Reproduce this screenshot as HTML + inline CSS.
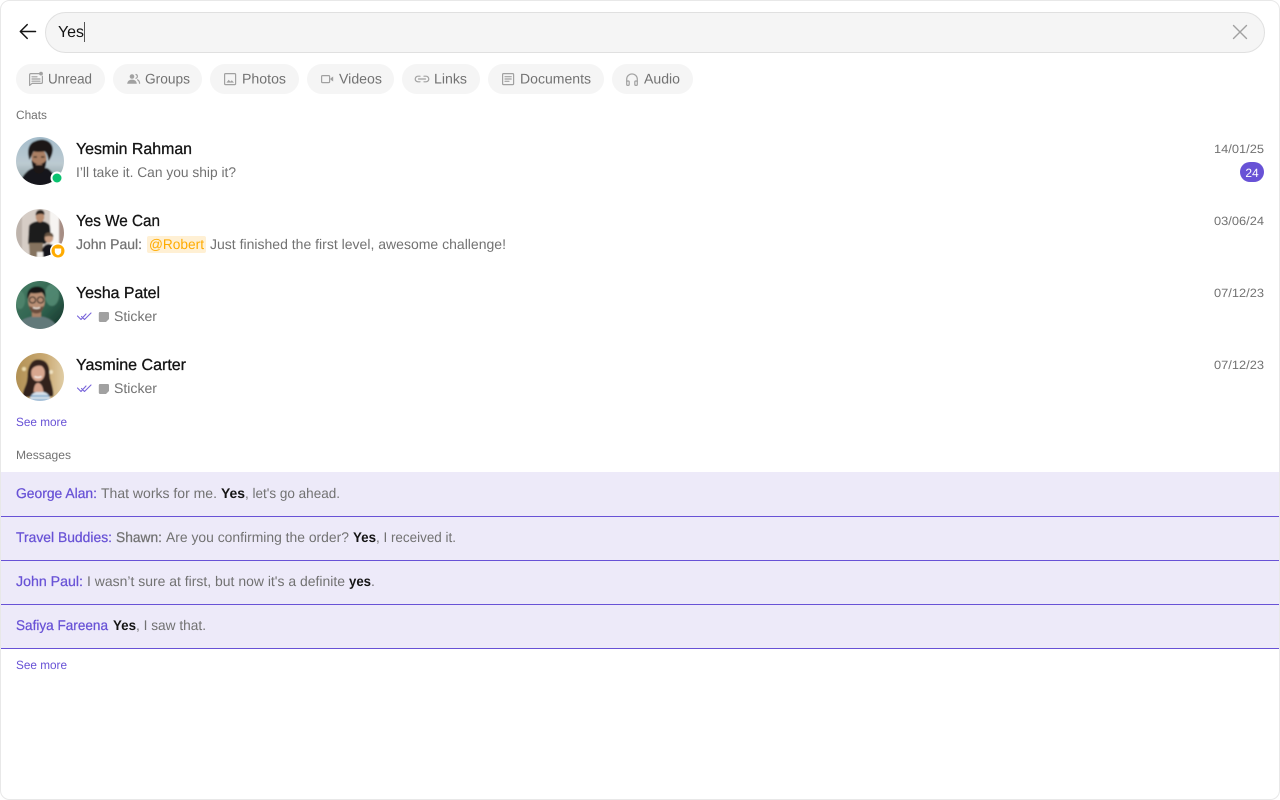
<!DOCTYPE html>
<html lang="en">
<head>
<meta charset="utf-8">
<title>Search</title>
<style>
html,body{margin:0;padding:0;background:#fff;width:1280px;height:800px;overflow:hidden}
svg{display:block}
text{font-family:"Liberation Sans",Arial,sans-serif;white-space:pre;text-rendering:geometricPrecision}
.chip{font-size:14px;fill:#727272}
.sec{font-size:12px;fill:#727272}
.name{font-size:16px;fill:#141414;stroke:#141414;stroke-width:.3}
.sub{font-size:14px;fill:#727272}
.subm{font-size:14px;fill:#727272;stroke:#727272;stroke-width:.25}
.date{font-size:12px;fill:#727272}
.link{font-size:12px;fill:#6852d6}
.snd{font-size:14px;fill:#6852d6;stroke:#6852d6;stroke-width:.25}
.hl{font-size:14px;fill:#141414;font-weight:bold}
.ic{fill:none;stroke:#a1a1a1;stroke-width:1.2;stroke-linecap:round;stroke-linejoin:round}
.row{fill:#edeaf9}
.rl{fill:#6852d6}
</style>
</head>
<body>
<svg width="1280" height="800" viewBox="0 0 1280 800" xmlns="http://www.w3.org/2000/svg">
<defs>
<filter id="b" x="-10%" y="-10%" width="120%" height="120%"><feGaussianBlur stdDeviation="0.8"/></filter>
<clipPath id="a1"><circle cx="40" cy="161" r="24"/></clipPath>
<clipPath id="a2"><circle cx="40" cy="233" r="24"/></clipPath>
<clipPath id="a3"><circle cx="40" cy="305" r="24"/></clipPath>
<clipPath id="a4"><circle cx="40" cy="377" r="24"/></clipPath>
<linearGradient id="g1" x1="0" y1="0" x2="0" y2="1"><stop offset="0" stop-color="#a3bccb"/><stop offset=".55" stop-color="#bccad1"/><stop offset="1" stop-color="#7d8f92"/></linearGradient>
<linearGradient id="g3" x1="0" y1="0" x2="1" y2="1"><stop offset="0" stop-color="#4a8168"/><stop offset=".6" stop-color="#2d5f4c"/><stop offset="1" stop-color="#0f2a22"/></linearGradient>
<linearGradient id="g4" x1="0" y1="0" x2="1" y2="0"><stop offset="0" stop-color="#b08f52"/><stop offset=".6" stop-color="#c9a972"/><stop offset="1" stop-color="#e2d0aa"/></linearGradient>
</defs>

<rect x=".5" y=".5" width="1279" height="799" rx="9" fill="#fff" stroke="#e8e8e8"/>

<!-- search bar -->
<path d="M35.500 31.500H20.800M27.200 24.600l-6.900 6.900 6.900 6.900" fill="none" stroke="#141414" stroke-width="1.500" stroke-linecap="round" stroke-linejoin="round"/>
<rect x="45.500" y="12.500" width="1219" height="40" rx="20" fill="#f5f5f5" stroke="#e0e0e0"/>
<text x="58" y="37" font-size="16" fill="#141414" textLength="26" lengthAdjust="spacingAndGlyphs">Yes</text>
<rect x="84" y="22" width="1" height="20" fill="#555"/>
<path d="M1233.500 25.500l13 13M1246.500 25.500l-13 13" fill="none" stroke="#a1a1a1" stroke-width="1.400" stroke-linecap="round"/>

<!-- chips -->
<g fill="#f5f5f5">
<rect x="16" y="64" width="89" height="30" rx="15"/>
<rect x="113" y="64" width="89" height="30" rx="15"/>
<rect x="210" y="64" width="89" height="30" rx="15"/>
<rect x="307" y="64" width="87" height="30" rx="15"/>
<rect x="402" y="64" width="78" height="30" rx="15"/>
<rect x="488" y="64" width="116" height="30" rx="15"/>
<rect x="612" y="64" width="81" height="30" rx="15"/>
</g>
<text class="chip" x="48" y="83.500" textLength="44" lengthAdjust="spacingAndGlyphs">Unread</text>
<text class="chip" x="145" y="83.500" textLength="45" lengthAdjust="spacingAndGlyphs">Groups</text>
<text class="chip" x="242" y="83.500" textLength="44" lengthAdjust="spacingAndGlyphs">Photos</text>
<text class="chip" x="339" y="83.500" textLength="43" lengthAdjust="spacingAndGlyphs">Videos</text>
<text class="chip" x="434" y="83.500" textLength="33" lengthAdjust="spacingAndGlyphs">Links</text>
<text class="chip" x="520" y="83.500" textLength="71" lengthAdjust="spacingAndGlyphs">Documents</text>
<text class="chip" x="644" y="83.500" textLength="36" lengthAdjust="spacingAndGlyphs">Audio</text>

<!-- unread icon -->
<path class="ic" d="M39 73.600h-8.200a1.200 1.200 0 0 0-1.200 1.200v10.600l2.400-2h9.200a1.200 1.200 0 0 0 1.200-1.200v-6"/>
<path class="ic" d="M32 76.800h5M32 79h8M32 81.200h8"/>
<circle cx="41" cy="73.600" r="1.900" fill="#a1a1a1"/>
<!-- groups icon -->
<circle cx="132" cy="76.500" r="2.300" fill="#a1a1a1"/>
<path d="M127.200 83.800c.2-2.800 2.200-4.200 4.800-4.200s4.600 1.400 4.800 4.200z" fill="#a1a1a1"/>
<path class="ic" d="M136 74.500a2 2 0 0 1 0 3.800M137.600 79.800c1.200.7 1.900 2 2 3.500"/>
<!-- photos icon -->
<rect class="ic" x="224.600" y="73.600" width="11" height="11" rx="1"/>
<path d="M226.400 82.600l2.300-2.800 1.600 1.800 1.500-1.300 2.200 2.300z" fill="#a1a1a1"/>
<!-- videos icon -->
<rect class="ic" x="321.600" y="75.600" width="8" height="7" rx="1"/>
<path d="M330.600 78.300l2.600-1.800v5l-2.600-1.800z" fill="#a1a1a1"/>
<!-- links icon -->
<path class="ic" d="M420 76.200h-2a2.800 2.800 0 0 0 0 5.600h2M424 76.200h2a2.800 2.800 0 0 1 0 5.600h-2M418.500 79h7"/>
<!-- documents icon -->
<rect class="ic" x="502.600" y="73.600" width="11" height="11" rx="1"/>
<path class="ic" d="M505 76.700h6.200M505 79h6.200M505 81.300h4"/>
<!-- audio icon -->
<path class="ic" d="M626.700 81.500v-2.300a5.300 5.300 0 0 1 10.600 0v2.300"/>
<rect class="ic" x="626.700" y="81" width="2.500" height="4.400" rx="1"/>
<rect class="ic" x="634.800" y="81" width="2.500" height="4.400" rx="1"/>

<text class="sec" x="16" y="119" textLength="31" lengthAdjust="spacingAndGlyphs">Chats</text>

<!-- avatar 1 -->
<g clip-path="url(#a1)"><g filter="url(#b)">
<rect x="14" y="135" width="52" height="52" fill="url(#g1)"/>
<path d="M18 190c1-10 8-20 15-22l14 0c6 3 10 12 11 22z" fill="#14171a"/>
<ellipse cx="39" cy="159" rx="7.500" ry="10" fill="#ab7f63"/>
<path d="M29.500 160c-3-9-1-17 6-19 7-3 15-1 17 6 1 5-1 10-4 14-.5-4-1.500-8-4-9.500-4 .5-8 .5-11 0-1 2-2 5-4 8.500z" fill="#1a1615"/>
<path d="M31.500 160c.5 8 3 13.500 7.500 13.500s7-5.500 7.500-13.500c-2 2.500-4.500 4-7.500 4s-5.500-1.500-7.500-4z" fill="#1e1816"/>
<path d="M33.500 157h3.500M41 157h3.500" stroke="#2a1c16" stroke-width="1.200"/>
<path d="M36 164.500h6" stroke="#a87f68" stroke-width="1"/>
</g></g>
<circle cx="57" cy="178" r="6.500" fill="#fff"/>
<circle cx="57" cy="178" r="4.500" fill="#09c26f"/>

<!-- avatar 2 -->
<g clip-path="url(#a2)"><g filter="url(#b)">
<rect x="14" y="207" width="52" height="52" fill="#d6cdc6"/>
<rect x="50" y="207" width="10" height="52" fill="#f6f4f2"/>
<rect x="59" y="207" width="7" height="52" fill="#a68d84"/>
<rect x="16" y="207" width="6" height="52" fill="#bdb3ac"/>
<path d="M28 244l1-18c1-3 7-5 11-5s9 2 10 5l1 12-6 6z" fill="#1a1a1d"/>
<ellipse cx="40" cy="217" rx="4.300" ry="5.200" fill="#b98d70"/>
<path d="M35.500 215.500c0-4 2.200-5.800 5-5.800s4.500 2.200 4 5.300c-2.500-1.500-5.500-1.500-9 .5z" fill="#2c221d"/>
<path d="M29 243h14l-1 17H30z" fill="#85735e"/>
<path d="M42 260v-10c1-4 4-6 7-6s7 3 8 7v9z" fill="#17181b"/>
<ellipse cx="49" cy="238" rx="4.300" ry="4.800" fill="#c9a085"/>
<path d="M44.500 237c0-3.500 2-4.500 4.500-4.500s4.500 1 4.500 4.500c-3-1.200-6-1.200-9 0z" fill="#63513f"/>
<rect x="37" y="252" width="6" height="8" fill="#f0ede9"/>
</g></g>
<circle cx="58" cy="251" r="8" fill="#fff"/>
<circle cx="58" cy="251" r="6.500" fill="#ffab00"/>
<path d="M54.800 248.500h6.400v3c0 1.900-1.400 3-3.200 3.800-1.800-.8-3.200-1.900-3.200-3.800z" fill="#fff"/>

<!-- avatar 3 -->
<g clip-path="url(#a3)"><g filter="url(#b)">
<rect x="14" y="279" width="52" height="52" fill="url(#g3)"/>
<ellipse cx="52" cy="295" rx="7" ry="11" fill="#5b917a" opacity=".75"/>
<ellipse cx="20" cy="300" rx="5" ry="9" fill="#568a72" opacity=".7"/>
<path d="M15 332c1-10 9-15 21-16 12 0 21 6 23 16z" fill="#62797a"/>
<rect x="32" y="308" width="9" height="9" fill="#a88168"/>
<ellipse cx="36.500" cy="301" rx="8.300" ry="11" fill="#b98f74"/>
<path d="M27.500 299c-1.500-8 3-12.500 9.500-12.500s9.500 4.500 8.500 11.500c-1-3-2-5-4-5.500-4 1-8 1-11 .5-1 2-1.500 4-3 6z" fill="#161513"/>
<path d="M29 306c1 5.500 4 7.500 7.500 7.500s6-2 7-7.500c-3 2-11 2-14.500 0z" fill="#6b4e3e"/>
<circle cx="32.500" cy="300" r="3.100" fill="none" stroke="#1b1b1b" stroke-width="1.100"/>
<circle cx="40.500" cy="300" r="3.100" fill="none" stroke="#1b1b1b" stroke-width="1.100"/>
<path d="M33 307.500c2 1 5 1 7 0" stroke="#f2e9e1" stroke-width="1.500" fill="none"/>
</g></g>

<!-- avatar 4 -->
<g clip-path="url(#a4)"><g filter="url(#b)">
<rect x="14" y="351" width="52" height="52" fill="url(#g4)"/>
<circle cx="24" cy="369" r="2" fill="#ecdcae"/>
<circle cx="51" cy="372" r="2" fill="#efe2c2"/>
<path d="M23 397c-1-6 3-10 4-16 1-5 0-9 2-14 2-5 5-7.500 9-7.500 6 0 10 3 11 9 1 5 0 8 2 13 1 5 3 9 2 15z" fill="#31201b"/>
<path d="M29 404c0-7 3-11 7-12h8c4 1 7 5 7 12z" fill="#d4dfe8"/>
<path d="M31 396h18M30 400h20" stroke="#7fa7cc" stroke-width="1.500"/>
<ellipse cx="38" cy="373" rx="6.800" ry="8.300" fill="#d8a78f"/>
<path d="M33.500 392c.5-5 1.500-9 4.500-9s5 4 5.500 9z" fill="#d3a18a"/>
<path d="M31.500 370c2-3.500 7-6 13-3-1-3.500-3.500-5.500-7-5.500-4.500 0-7 3.500-6 8.500z" fill="#31201b"/>
<path d="M34.500 376.500c2 1.200 5 1.200 7 0" stroke="#f7efe9" stroke-width="1.400" fill="none"/>
</g></g>

<!-- chat text -->
<text class="name" x="76" y="154" textLength="116" lengthAdjust="spacingAndGlyphs">Yesmin Rahman</text>
<text class="sub" x="76" y="177" textLength="160" lengthAdjust="spacingAndGlyphs">I’ll take it. Can you ship it?</text>
<text class="date" x="1214" y="153" textLength="50" lengthAdjust="spacingAndGlyphs">14/01/25</text>
<rect x="1240" y="162" width="24" height="20" rx="10" fill="#6852d6"/>
<text x="1252" y="177" font-size="12" fill="#fff" text-anchor="middle">24</text>

<text class="name" x="76" y="226" textLength="84" lengthAdjust="spacingAndGlyphs">Yes We Can</text>
<text class="subm" x="76" y="249" textLength="66" lengthAdjust="spacingAndGlyphs">John Paul:</text>
<rect x="147" y="236" width="59" height="17" rx="2" fill="#fff0d4"/>
<text x="149" y="249" font-size="14" fill="#ffab00" textLength="55" lengthAdjust="spacingAndGlyphs">@Robert</text>
<text class="sub" x="210" y="249" textLength="296" lengthAdjust="spacingAndGlyphs">Just finished the first level, awesome challenge!</text>
<text class="date" x="1214" y="225" textLength="50" lengthAdjust="spacingAndGlyphs">03/06/24</text>

<text class="name" x="76" y="298" textLength="84" lengthAdjust="spacingAndGlyphs">Yesha Patel</text>
<path d="M77.500 316l3.500 3.500 5-5.500M81.500 316.500l3 3 6.500-6.500" fill="none" stroke="#6852d6" stroke-width="1.100" stroke-linecap="round" stroke-linejoin="round" opacity=".9"/>
<path d="M100 312h7.800a1.200 1.200 0 0 1 1.200 1.200v5.800l-3 3h-6a1.200 1.200 0 0 1-1.200-1.200v-7.600a1.200 1.200 0 0 1 1.200-1.200z" fill="#a1a1a1"/>
<text class="sub" x="114" y="321" textLength="43" lengthAdjust="spacingAndGlyphs">Sticker</text>
<text class="date" x="1214" y="297" textLength="50" lengthAdjust="spacingAndGlyphs">07/12/23</text>

<text class="name" x="76" y="370" textLength="110" lengthAdjust="spacingAndGlyphs">Yasmine Carter</text>
<path d="M77.500 388l3.500 3.500 5-5.500M81.500 388.500l3 3 6.500-6.500" fill="none" stroke="#6852d6" stroke-width="1.100" stroke-linecap="round" stroke-linejoin="round" opacity=".9"/>
<path d="M100 384h7.800a1.200 1.200 0 0 1 1.200 1.200v5.800l-3 3h-6a1.200 1.200 0 0 1-1.200-1.200v-7.600a1.200 1.200 0 0 1 1.200-1.200z" fill="#a1a1a1"/>
<text class="sub" x="114" y="393" textLength="43" lengthAdjust="spacingAndGlyphs">Sticker</text>
<text class="date" x="1214" y="369" textLength="50" lengthAdjust="spacingAndGlyphs">07/12/23</text>

<text class="link" x="16" y="426" textLength="51" lengthAdjust="spacingAndGlyphs">See more</text>
<text class="sec" x="16" y="459" textLength="55" lengthAdjust="spacingAndGlyphs">Messages</text>

<!-- messages -->
<rect class="row" x="1" y="472" width="1278" height="44"/><rect class="rl" x="1" y="516" width="1278" height="1"/>
<rect class="row" x="1" y="517" width="1278" height="43"/><rect class="rl" x="1" y="560" width="1278" height="1"/>
<rect class="row" x="1" y="561" width="1278" height="43"/><rect class="rl" x="1" y="604" width="1278" height="1"/>
<rect class="row" x="1" y="605" width="1278" height="43"/><rect class="rl" x="1" y="648" width="1278" height="1"/>

<text class="snd" x="16" y="498" textLength="81" lengthAdjust="spacingAndGlyphs">George Alan:</text>
<text class="sub" x="101" y="498" textLength="116" lengthAdjust="spacingAndGlyphs">That works for me.</text>
<text class="hl" x="221" y="498" textLength="24" lengthAdjust="spacingAndGlyphs">Yes</text>
<text class="sub" x="245" y="498" textLength="95" lengthAdjust="spacingAndGlyphs">, let's go ahead.</text>

<text class="snd" x="16" y="542" textLength="96" lengthAdjust="spacingAndGlyphs">Travel Buddies:</text>
<text class="subm" x="116" y="542" textLength="46" lengthAdjust="spacingAndGlyphs">Shawn:</text>
<text class="sub" x="166" y="542" textLength="183" lengthAdjust="spacingAndGlyphs">Are you confirming the order?</text>
<text class="hl" x="353" y="542" textLength="23" lengthAdjust="spacingAndGlyphs">Yes</text>
<text class="sub" x="376" y="542" textLength="80" lengthAdjust="spacingAndGlyphs">, I received it.</text>

<text class="snd" x="16" y="586" textLength="67" lengthAdjust="spacingAndGlyphs">John Paul:</text>
<text class="sub" x="87" y="586" textLength="258" lengthAdjust="spacingAndGlyphs">I wasn’t sure at first, but now it's a definite</text>
<text class="hl" x="349" y="586" textLength="22" lengthAdjust="spacingAndGlyphs">yes</text>
<text class="sub" x="371" y="586">.</text>

<text class="snd" x="16" y="630" textLength="92" lengthAdjust="spacingAndGlyphs">Safiya Fareena</text>
<text class="hl" x="113" y="630" textLength="23" lengthAdjust="spacingAndGlyphs">Yes</text>
<text class="sub" x="136" y="630" textLength="70" lengthAdjust="spacingAndGlyphs">, I saw that.</text>

<text class="link" x="16" y="669" textLength="51" lengthAdjust="spacingAndGlyphs">See more</text>
</svg>
</body>
</html>
